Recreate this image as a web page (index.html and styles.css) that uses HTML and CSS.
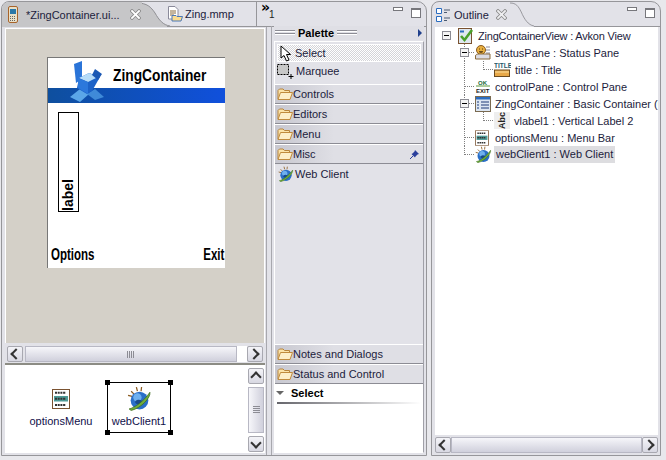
FILE: index.html
```html
<!DOCTYPE html>
<html lang="en">
<head>
    <meta charset="UTF-8">
    <title>ZingContainer</title>
    <link rel="stylesheet" href="styles.css">
</head>
<body>
    <svg class="defs" width="0" height="0">
        <symbol id="folder" viewBox="0 0 16 14">
            <path d="M1 12V3.500L2.500 2H6L7.500 3.500H12.500V5.500" fill="#fbe3a8" stroke="#b8843c"/>
            <path d="M1 12.500L3.500 5.500H15.500L13 12.500Z" fill="#fdeec8" stroke="#c08a3c"/>
        </symbol>
        <symbol id="globe" viewBox="0 0 24 24">
            <path d="M4 5L7 8M9 1L10 5M14 1L13.500 5M1 9L5 10" stroke="#8a5a20" stroke-width="1.200"/>
            <circle cx="12" cy="14" r="8.500" fill="#2a6fc8"/>
            <circle cx="10" cy="11" r="4" fill="#6fb0ee"/>
            <path d="M14 14C16 17 10 19 8 16C7 14 11 12 14 14Z" fill="#174a8c"/>
            <path d="M2 22C7 21 16 15 22 6C23 11 14 21 4 23.500Z" fill="#6fae3c" stroke="#3c6a1e" stroke-width=".7"/>
        </symbol>
        <symbol id="menuicon" viewBox="0 0 18 20">
            <rect x=".5" y=".5" width="17" height="19" fill="#fff" stroke="#7a5230"/>
            <rect x="2" y="7" width="14" height="5.500" fill="#4e9a96"/>
            <path d="M3 3.800H14M3 9.800H14M3 16H14" stroke="#333" stroke-width="2" stroke-dasharray="2 .7"/>
        </symbol>
    </svg>

    <div class="workbench">
        <!-- editor + palette share one tab folder -->
        <section class="pane main-pane">
            <header class="pane-head">
                <div class="tab tab-active">
                    <svg class="tab-icon" width="10" height="17" viewBox="0 0 10 17">
                        <rect x=".5" y=".5" width="9" height="16" rx="1.500" fill="#e8e0c8" stroke="#a8642a"/>
                        <rect x="2" y="3" width="6" height="5" fill="#2a78a8"/>
                        <path d="M2 10.500H8M2 12.500H8M2 14.500H8" stroke="#666" stroke-dasharray="1 1"/>
                    </svg>
                    <span class="tab-title">*ZingContainer.ui...</span>
                    <svg class="tab-close" width="11" height="11" viewBox="0 0 11 11">
                        <path d="M2 2L9 9M9 2L2 9" stroke="#8a8a8a" stroke-width="3.400" stroke-linecap="square"/>
                        <path d="M2 2L9 9M9 2L2 9" stroke="#fff" stroke-width="1.800" stroke-linecap="square"/>
                    </svg>
                </div>
                <svg class="tab-curve" width="28" height="25" viewBox="5 0 28 25">
                    <path d="M0 1C10 1 14 5 18 11C22 18 26 23 33 24V25H0Z" fill="#c6c6c8"/>
                    <path d="M0 1C10 1 14 5 18 11C22 18 26 23 33 24" fill="none" stroke="#8f8f93"/>
                </svg>
                <div class="tab tab-plain">
                    <svg class="tab-icon" width="16" height="16" viewBox="0 0 16 16">
                        <path d="M1.500 .5H8L11 3.500V13H1.500Z" fill="#fff" stroke="#8a8a9a"/>
                        <path d="M3 5H9M3 7H9M3 9H7" stroke="#8a6a3a"/>
                        <path d="M5 15V9.500H9L10 10.500H14L15.500 10.500L14 15Z" fill="#fbdc90" stroke="#4a78b8"/>
                    </svg>
                    <span>Zing.mmp</span>
                </div>
                <div class="tab-more">
                    <div class="more-count"><span class="chevrons">»</span><span class="count">1</span></div>
                    <div class="view-btns"><i class="btn-min"></i><i class="btn-max"></i></div>
                </div>
            </header>

            <div class="main-body">
                <div class="editor-body">
                    <div class="canvas">
                        <div class="phone">
                            <svg class="phone-logo" width="38" height="42" viewBox="0 0 38 42">
                                <path d="M6 3L14 0V18L8 22Z" fill="#2a74d8"/>
                                <path d="M2 36L12 28L21 33L12 41Z" fill="#5aa6e8"/>
                                <path d="M19 33L27 28L36 36L27 39Z" fill="#3f8ad8"/>
                                <path d="M11 17L21 12L32 16L24 30L19 33L9 27Z" fill="#1c62c8"/>
                                <path d="M11 17L21 12L30 16L20 21Z" fill="#b6dcf8"/>
                                <path d="M20 21V33L10 27V17Z" fill="#2c78dc"/>
                                <path d="M27 8L34 13L30 19L24 14Z" fill="#1a58b4"/>
                            </svg>
                            <div class="phone-title"><span>ZingContainer</span></div>
                            <div class="phone-band"></div>
                            <div class="phone-content">
                                <div class="vlabel"><span>label</span></div>
                            </div>
                            <div class="softkeys"><span class="key-left">Options</span><span class="key-right">Exit</span></div>
                        </div>
                    </div>
                    <div class="scroll-h editor-scroll">
                        <span class="sb-btn sb-left"></span>
                        <span class="sb-thumb"><i class="grip-h"></i></span>
                        <span class="sb-track"></span>
                        <span class="sb-btn sb-right"></span>
                    </div>
                    <div class="tray">
                        <div class="tray-items">
                            <div class="tray-item">
                                <svg class="tray-menu" width="18" height="20"><use href="#menuicon"/></svg>
                                <span>optionsMenu</span>
                            </div>
                            <div class="tray-item tray-selected">
                                <i class="handle tl"></i><i class="handle tr"></i><i class="handle bl"></i><i class="handle br"></i>
                                <svg width="25" height="25"><use href="#globe"/></svg>
                                <span>webClient1</span>
                            </div>
                        </div>
                        <div class="scroll-v">
                            <span class="sb-btn sb-up"></span>
                            <span class="sb-thumb-v"><i class="grip-v"></i></span>
                            <span class="sb-btn sb-down"></span>
                        </div>
                    </div>
                </div>

                <div class="palette">
                    <div class="palette-title">
                        <i class="grip"></i><b>Palette</b><i class="grip"></i>
                        <i class="arrow-right"></i>
                    </div>
                    <div class="palette-box">
                        <div class="tool tool-active">
                            <svg width="15" height="17" viewBox="0 0 15 17">
                                <path d="M1 1V13L4 10.500L6.500 16L9 15L6.500 9.500H10.500Z" fill="#fff" stroke="#000"/>
                            </svg>
                            <span>Select</span>
                        </div>
                        <div class="tool">
                            <svg width="17" height="17" viewBox="0 0 17 17">
                                <rect x=".5" y="1.500" width="11" height="10" fill="#c8c8c8" stroke="#000" stroke-dasharray="2 1"/>
                                <path d="M14 11V16M11.500 13.500H16.500" stroke="#000"/>
                            </svg>
                            <span>Marquee</span>
                        </div>
                        <div class="drawer"><svg width="16" height="14"><use href="#folder"/></svg><span>Controls</span></div>
                        <div class="drawer"><svg width="16" height="14"><use href="#folder"/></svg><span>Editors</span></div>
                        <div class="drawer"><svg width="16" height="14"><use href="#folder"/></svg><span>Menu</span></div>
                        <div class="drawer">
                            <svg width="16" height="14"><use href="#folder"/></svg><span>Misc</span>
                            <svg class="pin" width="9" height="9" viewBox="0 0 9 9">
                                <path d="M5 0L9 4L7.500 4.500L5.500 6.500L5 7.500L1.500 4L2.500 3.500L4.500 1.500Z" fill="#2a3f9c"/>
                                <path d="M3 6L0 9" stroke="#2a3f9c"/>
                            </svg>
                        </div>
                        <div class="drawer-open">
                            <div class="tool tool-entry"><svg width="16" height="16"><use href="#globe"/></svg><span>Web Client</span></div>
                        </div>
                        <div class="drawer"><svg width="16" height="14"><use href="#folder"/></svg><span>Notes and Dialogs</span></div>
                        <div class="drawer"><svg width="16" height="14"><use href="#folder"/></svg><span>Status and Control</span></div>
                        <div class="props">
                            <div class="props-title"><i class="arrow-down"></i><b>Select</b></div>
                            <div class="props-rule"></div>
                        </div>
                    </div>
                </div>
            </div>
        </section>

        <!-- outline -->
        <section class="pane outline-pane">
            <header class="pane-head">
                <div class="tab tab-outline">
                    <svg class="tab-icon" width="16" height="16" viewBox="0 0 16 16">
                        <path d="M1.500 1.500H6.500V6.500H1.500ZM1.500 9.500H6.500V14.500H1.500Z" fill="#fff" stroke="#2a6cc0"/>
                        <path d="M9 3H15M9 5.500H12M9 11H15M9 13.500H12" stroke="#4a5a70"/>
                    </svg>
                    <span>Outline</span>
                    <svg class="tab-close" width="11" height="11" viewBox="0 0 11 11">
                        <path d="M2 2L9 9M9 2L2 9" stroke="#8a8a8a" stroke-width="3.400" stroke-linecap="square"/>
                        <path d="M2 2L9 9M9 2L2 9" stroke="#eeeef0" stroke-width="1.800" stroke-linecap="square"/>
                    </svg>
                </div>
                <svg class="tab-curve" width="24" height="25" viewBox="0 0 32 25" preserveAspectRatio="none">
                    <path d="M0 1C8 1 11 4 15 10C19 17 24 23 32 24" fill="none" stroke="#8f8f93"/>
                </svg>
                <div class="head-rule">
                    <div class="view-btns"><i class="btn-min"></i><i class="btn-max"></i></div>
                </div>
            </header>
            <div class="outline-body">
                <div class="tree">
                    <div class="row row-root">
                        <i class="toggle"></i>
                        <svg class="ti" width="16" height="16" viewBox="0 0 16 16">
                            <rect x=".5" y=".5" width="13" height="15" fill="#dfe8f0" stroke="#7a5230"/>
                            <path d="M2 3.500H6" stroke="#2a6cc0" stroke-width="2"/>
                            <path d="M3 8L6.500 12L14 2" fill="none" stroke="#4aa02c" stroke-width="2.600"/>
                        </svg>
                        <span>ZingContainerView : Avkon View</span>
                    </div>
                    <div class="row">
                        <span class="twig"><i class="toggle toggle-on"></i></span>
                        <svg class="ti" width="16" height="15" viewBox="0 0 16 15">
                            <circle cx="6" cy="5" r="4.500" fill="#e8b040" stroke="#8a5a20"/>
                            <path d="M4 4H5M7 4H8M4 6.500C5 7.500 7 7.500 8 6.500" stroke="#5a3a10"/>
                            <path d="M11 2H15M11 5H15M11 8H15" stroke="#8a8a9a"/>
                            <path d="M.5 14V11C.5 9.500 2 9 4 9H15V14Z" fill="#dcdce4" stroke="#8a6a3a"/>
                        </svg>
                        <span>statusPane : Status Pane</span>
                    </div>
                    <div class="row">
                        <span class="twig twig-pass"></span>
                        <span class="twig twig-end"></span>
                        <svg class="ti ti-wide" width="17" height="15" viewBox="0 0 17 15">
                            <text x="0" y="5.500" class="title-glyph">TITLE</text>
                            <rect x=".5" y="8" width="15" height="6.500" fill="#e8a848" stroke="#6a4a20"/>
                            <path d="M1 10H15" stroke="#fbe0a0"/>
                        </svg>
                        <span>title : Title</span>
                    </div>
                    <div class="row">
                        <span class="twig"></span>
                        <svg class="ti" width="16" height="16" viewBox="0 0 16 16">
                            <text x="3" y="6" class="ok-glyph">OK</text>
                            <path d="M1 7H15" stroke="#5a9a3a"/>
                            <text x="1" y="14" class="ok-glyph exit-glyph">EXIT</text>
                        </svg>
                        <span>controlPane : Control Pane</span>
                    </div>
                    <div class="row">
                        <span class="twig"><i class="toggle toggle-on"></i></span>
                        <svg class="ti" width="16" height="16" viewBox="0 0 16 16">
                            <rect x=".5" y=".5" width="15" height="15" fill="#dce6f2" stroke="#7a6a50"/>
                            <rect x="1" y="1" width="14" height="2.500" fill="#2a6cc0"/>
                            <path d="M2 6H4M6 6H14M2 9H4M6 9H14M2 12H4M6 12H14" stroke="#1e3a78"/>
                        </svg>
                        <span>ZingContainer : Basic Container (C</span>
                    </div>
                    <div class="row">
                        <span class="twig twig-pass"></span>
                        <span class="twig twig-end"></span>
                        <span class="abc"><span>Abc</span></span>
                        <span>vlabel1 : Vertical Label 2</span>
                    </div>
                    <div class="row">
                        <span class="twig"></span>
                        <svg class="ti" width="14" height="16" viewBox="0 0 18 20"><use href="#menuicon"/></svg>
                        <span class="after-narrow">optionsMenu : Menu Bar</span>
                    </div>
                    <div class="row">
                        <span class="twig twig-last"></span>
                        <svg class="ti" width="17" height="17"><use href="#globe"/></svg>
                        <span class="tree-selected">webClient1 : Web Client</span>
                    </div>
                </div>
                <div class="scroll-h outline-scroll">
                    <span class="sb-btn sb-left"></span>
                    <span class="sb-thumb"></span>
                    <span class="sb-btn sb-right"></span>
                </div>
            </div>
        </section>
    </div>
</body>
</html>
```

FILE: styles.css
```css
* {
    box-sizing: border-box;
}
body {
    margin: 0;
    width: 666px;
    height: 460px;
    overflow: hidden;
    background: #e8e8ec;
    font-family: "Liberation Sans", sans-serif;
    font-size: 11px;
    color: #1c1c3c;
}
.defs {
    position: absolute;
}
.workbench {
    display: flex;
    height: 456px;
    padding-top: 1px;
}
.pane {
    display: flex;
    flex-direction: column;
    background: #e2e2e8;
    border: 1px solid #96969a;
    border-radius: 8px 10px 0 0;
    overflow: hidden;
}
.main-pane {
    width: 426px;
    margin-left: 1px;
}
.outline-pane {
    width: 230px;
    margin-left: 4px;
}
.pane-head {
    display: flex;
    height: 25px;
    flex: none;
}

/* tabs */
.tab {
    display: flex;
    align-items: center;
    height: 25px;
}
.tab-icon {
    flex: none;
}
.tab-active {
    width: 140px;
    flex: none;
    padding-left: 6px;
    background: #c6c6c8;
}
.tab-title {
    margin-left: 8px;
    width: 104px;
    flex: none;
    white-space: nowrap;
}
.tab-close {
    flex: none;
}
.tab-plain {
    width: 89px;
    flex: none;
    margin-left: -3px;
    gap: 2px;
    border-bottom: 1px solid #96969a;
}
.tab-more {
    flex: 1;
    display: flex;
    justify-content: space-between;
    border-left: 1px solid #96969a;
    border-bottom: 1px solid #96969a;
}
.more-count {
    padding: 2px 0 0 4px;
}
.chevrons {
    display: block;
    font-family: "DejaVu Sans", sans-serif;
    font-weight: bold;
    font-size: 14px;
    line-height: 6px;
    color: #000;
}
.count {
    display: block;
    padding-left: 8px;
    color: #222;
    line-height: 10px;
    font-size: 10px;
}
.tab-curve {
    flex: none;
}
.tab-outline {
    width: 78px;
    flex: none;
    padding-left: 3px;
    gap: 3px;
}
.tab-outline .tab-close {
    margin-left: 4px;
}
.head-rule {
    flex: 1;
    display: flex;
    justify-content: flex-end;
    border-bottom: 1px solid #96969a;
}
.view-btns {
    display: flex;
    gap: 8px;
    padding: 5px 5px 0 0;
}
.btn-min {
    width: 10px;
    height: 4px;
    background: #fff;
    border: 1px solid #77777c;
}
.btn-max {
    width: 10px;
    height: 10px;
    margin-top: 1px;
    background: #fff;
    border: 1px solid #77777c;
    border-top-width: 2px;
}

/* editor */
.main-body {
    flex: 1;
    display: flex;
    min-height: 0;
}
.editor-body {
    width: 265px;
    flex: none;
    display: flex;
    flex-direction: column;
    padding: 1px 1px 2px 3px;
    border-right: 1px solid #a8a8ae;
}
.canvas {
    height: 315px;
    flex: none;
    padding: 28px 0 0 41px;
    background: #d4d0c8;
    border: 1px solid #fff;
    border-bottom: 0;
}
.phone {
    position: relative;
    display: flex;
    flex-direction: column;
    width: 178px;
    height: 211px;
    background: #fff;
    border-top: 1px solid #777;
    border-left: 1px solid #777;
    color: #000;
}
.phone-logo {
    position: absolute;
    left: 20px;
    top: 3px;
}
.phone-title span,
.softkeys span {
    display: inline-block;
    font-weight: bold;
    white-space: nowrap;
    transform-origin: left center;
}
.phone-title {
    height: 30px;
    padding: 8px 0 0 65px;
    font-size: 17px;
    line-height: 20px;
}
.phone-title span {
    transform: scaleX(.81);
}
.phone-band {
    height: 15px;
    background: linear-gradient(to right, #0e4f9e, #1050dc);
}
.phone-content {
    flex: 1;
    padding: 9px 0 0 10px;
}
.vlabel {
    display: flex;
    align-items: flex-end;
    justify-content: center;
    width: 21px;
    height: 100px;
    border: 1px solid #000;
}
.vlabel span {
    writing-mode: vertical-rl;
    transform: rotate(180deg);
    font-weight: bold;
    font-size: 14px;
    line-height: 19px;
}
.softkeys {
    display: flex;
    justify-content: space-between;
    height: 22px;
    padding: 0 1px 0 3px;
    font-size: 16px;
    line-height: 18px;
}
.key-left {
    transform: scaleX(.72);
}
.softkeys .key-right {
    transform: scaleX(.72);
    transform-origin: right center;
}

/* scrollbars */
.sb-btn {
    display: flex;
    align-items: center;
    justify-content: center;
    width: 16px;
    height: 16px;
    flex: none;
    border: 1px solid #a8a8b0;
    border-radius: 2px;
    background: linear-gradient(#f4f4f8, #d8d8e2);
}
.sb-btn::before {
    content: "";
    width: 6px;
    height: 6px;
    border-left: 2px solid #333;
    border-top: 2px solid #333;
}
.sb-left::before {
    margin-left: 2px;
    transform: rotate(-45deg);
}
.sb-right::before {
    margin-right: 2px;
    transform: rotate(135deg);
}
.sb-up::before {
    margin-top: 2px;
    transform: rotate(45deg);
}
.sb-down::before {
    margin-bottom: 2px;
    transform: rotate(225deg);
}
.scroll-h {
    display: flex;
    height: 16px;
    flex: none;
}
.sb-thumb {
    flex: 1;
    display: flex;
    align-items: center;
    justify-content: center;
    border: 1px solid #b8b8c4;
    background: linear-gradient(#f6f6fa, #d0d0dc);
}
.grip-h {
    width: 8px;
    height: 7px;
    background: repeating-linear-gradient(to right, #8c8c94 0 1px, transparent 1px 2px);
}
.grip-v {
    width: 7px;
    height: 8px;
    background: repeating-linear-gradient(#8c8c94 0 1px, transparent 1px 2px);
}
.sb-track {
    width: 10px;
    flex: none;
    background: #fff;
}
.editor-scroll {
    margin: 3px 0 0 2px;
}
.editor-scroll .sb-thumb {
    flex: none;
    width: 212px;
    margin-left: 2px;
}
.tray {
    flex: 1;
    display: flex;
    margin-top: 1px;
    background: #fff;
    border-top: 2px solid #8c8c84;
}
.tray-items {
    flex: 1;
    display: flex;
    padding: 17px 0 0 24px;
}
.tray-item {
    position: relative;
    display: flex;
    flex-direction: column;
    align-items: center;
    width: 64px;
    height: 51px;
    padding-top: 3px;
    border: 1px solid transparent;
    color: #10104a;
}
.tray-item span {
    margin-top: auto;
    padding-bottom: 4px;
    line-height: 14px;
}
.tray-menu {
    margin-top: 3px;
}
.tray-selected {
    margin-left: 14px;
    border-color: #000;
}
.handle {
    position: absolute;
    width: 5px;
    height: 5px;
    background: #000;
}
.tl { left: -3px; top: -3px; }
.tr { right: -3px; top: -3px; }
.bl { left: -3px; bottom: -3px; }
.br { right: -3px; bottom: -3px; }
.scroll-v {
    display: flex;
    flex-direction: column;
    width: 16px;
    margin: 3px 1px 1px 0;
    gap: 3px;
    flex: none;
}
.sb-thumb-v {
    flex: 1;
    display: flex;
    align-items: center;
    justify-content: center;
    border: 1px solid #b8b8c4;
    background: linear-gradient(to right, #f6f6fa, #d0d0dc);
}

/* palette */
.palette {
    flex: 1;
    display: flex;
    flex-direction: column;
    margin: -1px 0 0 4px;
    padding: 0 2px 2px 2px;
    border-left: 1px solid #a8a8ae;
    min-width: 0;
}
.palette-title {
    display: flex;
    align-items: center;
    height: 14px;
    gap: 3px;
    padding-left: 1px;
    flex: none;
    background: #dfdfe5;
    color: #000;
}
.grip {
    width: 20px;
    height: 6px;
    background: repeating-linear-gradient(#8c8c94 0 1px, #fff 1px 2px, transparent 2px 3px);
}
.arrow-right {
    width: 0;
    height: 0;
    margin-left: auto;
    margin-right: 2px;
    border-left: 4px solid #20408c;
    border-top: 4px solid transparent;
    border-bottom: 4px solid transparent;
}
.palette-box {
    flex: 1;
    display: flex;
    flex-direction: column;
    margin-top: 1px;
    border: 1px solid #fff;
    border-right-color: #a0a0a8;
    min-height: 0;
}
.tool {
    display: flex;
    align-items: center;
    height: 18px;
    gap: 2px;
    margin-left: 2px;
    flex: none;
}
.tool-active {
    height: 18px;
    margin: 2px 2px 0 2px;
    padding-left: 2px;
    gap: 0;
    border: 1px solid #fff;
    background: repeating-conic-gradient(#fff 0 25%, #d4d4d8 0 50%) 0 0 / 2px 2px;
}
.tool + .drawer {
    margin-top: 4px;
}
.drawer {
    display: flex;
    align-items: center;
    height: 20px;
    flex: none;
    gap: 0;
    padding-left: 2px;
    border-top: 1px solid #fff;
    border-bottom: 1px solid #8c8c94;
    background: linear-gradient(to right, #c8c8d0, #dfdfe5 40%);
}
.pin {
    margin-left: auto;
    margin-right: 4px;
}
.drawer-open {
    flex: 1;
}
.tool-entry {
    margin: 1px 0 0 3px;
    gap: 1px;
}
.props {
    flex: none;
    height: 68px;
    background: #fff;
}
.props-title {
    display: flex;
    align-items: center;
    gap: 7px;
    height: 17px;
    padding-left: 1px;
    color: #000;
}
.arrow-down {
    width: 0;
    height: 0;
    border-top: 4px solid #666;
    border-left: 4px solid transparent;
    border-right: 4px solid transparent;
}
.props-rule {
    height: 2px;
    margin: 1px 2px;
    background: linear-gradient(to right, #66666c, #fff);
}

/* outline */
.outline-body {
    flex: 1;
    display: flex;
    flex-direction: column;
    min-height: 0;
    padding: 0 2px 2px 3px;
}
.tree {
    flex: 1;
    padding: 0 0 0 7px;
    background: #fff;
    overflow: hidden;
}
.row {
    display: flex;
    align-items: center;
    height: 17px;
    padding-left: 22px;
    white-space: nowrap;
}
.row-root {
    padding-left: 0;
    letter-spacing: -.2px;
}
.row > span:last-child {
    margin-left: 4px;
}
.row > .after-narrow:last-child {
    margin-left: 6px;
}
.row > .tree-selected:last-child {
    margin-left: 2px;
}
.ti {
    flex: none;
}
.row-root .ti {
    margin-left: 7px;
    margin-right: 0;
}
.toggle {
    display: block;
    flex: none;
    width: 9px;
    height: 9px;
    border: 1px solid #8c8c94;
    background: #f4f4f4 linear-gradient(#000, #000) center / 5px 1px no-repeat;
}
.toggle-on {
    margin-left: -5px;
    margin-top: 4px;
}
.twig {
    flex: none;
    align-self: stretch;
    width: 11px;
    border-left: 1px dotted #808080;
    background: repeating-linear-gradient(to right, #808080 0 1px, transparent 1px 2px) 0 8px / 100% 1px no-repeat;
}
.twig-pass {
    width: 19px;
    background: none;
}
.twig-end,
.twig-last {
    height: 9px;
    align-self: flex-start;
}
.ti-wide {
    width: 17px;
}
.title-glyph,
.ok-glyph {
    font-weight: bold;
    font-size: 6.500px;
    fill: #1f5a6a;
}
.ok-glyph {
    font-size: 6px;
    fill: #1a6a3a;
}
.exit-glyph {
    fill: #222;
}
.abc {
    display: flex;
    align-items: center;
    justify-content: center;
    flex: none;
    width: 16px;
    height: 17px;
    background: #eeeeee;
}
.abc span {
    writing-mode: vertical-rl;
    transform: rotate(180deg);
    font-weight: bold;
    font-size: 9px;
    line-height: 10px;
    color: #222;
}
.tree-selected {
    padding: 0 2px;
    line-height: 17px;
    background: #dddde0;
}
.outline-scroll {
    margin-top: 2px;
}
```
